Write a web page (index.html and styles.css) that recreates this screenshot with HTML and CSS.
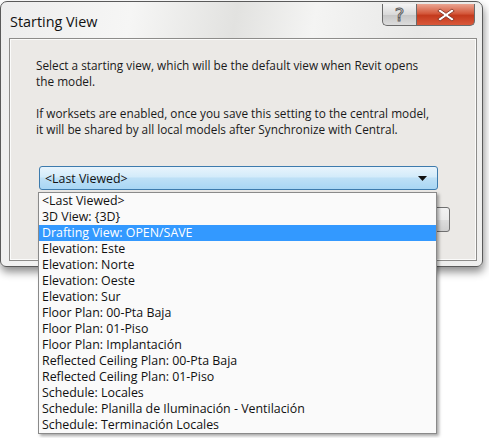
FILE: index.html
```html
<!DOCTYPE html>
<html>
<head>
<meta charset="utf-8">
<link rel="stylesheet" href="styles.css">
</head>
<body>
<div class="window">
  <div class="titlebar">
    <div class="title">Starting View</div>
    <div class="caption">
      <div class="cbtn help">?</div>
      <div class="cbtn close">
        <svg width="18" height="14" viewBox="0 0 18 14"><path d="M3 1 L9 5.3 L15 1 L17.2 3 L11.2 7 L17.2 11 L15 13 L9 8.7 L3 13 L0.8 11 L6.8 7 L0.8 3 Z" fill="#fff" stroke="#7a2a1a" stroke-width="0.8"/></svg>
      </div>
    </div>
  </div>
  <div class="panel">
    <p class="msg">Select a starting view, which will be the default view when Revit opens<br>the model.</p>
    <p class="msg">If worksets are enabled, once you save this setting to the central model,<br>it will be shared by all local models after Synchronize with Central.</p>
    <div class="combo">
      <span>&lt;Last Viewed&gt;</span>
      <svg class="arrow" width="9" height="5" viewBox="0 0 9 5"><path d="M0 0 H9 L4.5 5 Z" fill="#111"/></svg>
    </div>
    <div class="buttons">
      <div class="btn">OK</div>
    </div>
  </div>
</div>
<ul class="list">
  <li>&lt;Last Viewed&gt;</li>
  <li>3D View: {3D}</li>
  <li class="sel">Drafting View: OPEN/SAVE</li>
  <li>Elevation: Este</li>
  <li>Elevation: Norte</li>
  <li>Elevation: Oeste</li>
  <li>Elevation: Sur</li>
  <li>Floor Plan: 00-Pta Baja</li>
  <li>Floor Plan: 01-Piso</li>
  <li>Floor Plan: Implantación</li>
  <li>Reflected Ceiling Plan: 00-Pta Baja</li>
  <li>Reflected Ceiling Plan: 01-Piso</li>
  <li>Schedule: Locales</li>
  <li>Schedule: Planilla de Iluminación - Ventilación</li>
  <li>Schedule: Terminación Locales</li>
</ul>
</body>
</html>
```

FILE: styles.css
```css
html, body {
  margin: 0;
  padding: 0;
}
body {
  width: 489px;
  height: 438px;
  overflow: hidden;
  background: #ffffff;
  font-family: "Open Sans", "Liberation Sans", sans-serif;
  font-size: 12px;
  color: #111;
  position: relative;
}
.window {
  margin-top: 1px;
  height: 259px;
  border: 1px solid #5a5a5a;
  border-radius: 7px 7px 6px 6px;
  background: linear-gradient(100deg, #ededed 0%, #f6f6f5 25%, #e2e2e0 45%, #f4f4f3 60%, #e8e8e7 80%, #f0f0ef 100%);
  box-shadow: 1px 5px 9px rgba(0,0,0,0.45);
  display: flex;
  flex-direction: column;
  padding: 0 5px 5px 8px;
  box-sizing: content-box;
  width: 468px;
}
.titlebar {
  height: 36px;
  display: flex;
  align-items: flex-start;
  margin-right: -5px;
}
.title {
  font-size: 14.4px;
  color: #111;
  padding-top: 10px;
  padding-left: 1px;
  flex: 1;
}
.caption {
  display: flex;
  margin-top: 2px;
  margin-right: 7px;
}
.cbtn {
  height: 21px;
  border: 1px solid #6a6a6a;
  border-top: none;
  display: flex;
  align-items: center;
  justify-content: center;
}
.help {
  width: 33px;
  border-radius: 0 0 0 5px;
  border-right: none;
  background: linear-gradient(#f4f4f4, #d9d9d9 50%, #c6c6c6 52%, #dcdcdc);
  color: #f2f2f2;
  font-family: "DejaVu Sans", sans-serif;
  font-size: 18px;
  -webkit-text-stroke: 1px #606060;
}
.close {
  width: 57px;
  border-radius: 0 0 5px 0;
  background: linear-gradient(#eaa592, #d4593c 45%, #c43a1d 55%, #d9583a);
}
.panel {
  flex: 1;
  background: #ebe9e6;
  border: 1px solid #8d8c8a;
  box-shadow: inset 0 0 0 1px #fbfbfa;
  padding: 18px 26px 0 26px;
  display: flex;
  flex-direction: column;
}
.msg {
  margin: 0 0 16px 0;
  line-height: 16px;
  font-size: 11.8px;
  color: #1a1a1a;
  width: 420px;
  white-space: nowrap;
}
.combo {
  margin-top: 13px;
  margin-left: 3px;
  width: 392px;
  height: 22px;
  border: 1px solid #3d7bad;
  border-radius: 3px;
  background: linear-gradient(#e8f4fc, #d3ebfa 45%, #bee0f6 50%, #a8d6f4);
  display: flex;
  align-items: center;
  padding-left: 5px;
  font-size: 12.4px;
}
.combo span { flex: 1; }
.arrow { margin-right: 10px; }
.buttons {
  display: flex;
  justify-content: flex-end;
  margin-top: 17px;
}
.btn {
  width: 73px;
  height: 23px;
  border: 1px solid #707070;
  border-radius: 3px;
  background: linear-gradient(#f2f2f2, #ebebeb 50%, #dddddd 51%, #cfcfcf);
  display: flex;
  align-items: center;
  justify-content: center;
}
.list {
  position: absolute;
  left: 38px;
  top: 192px;
  width: 397px;
  height: 240px;
  margin: 0;
  padding: 0;
  list-style: none;
  background: #fafafa;
  border: 1px solid #8a8a8a;
  box-shadow: 2px 2px 3px rgba(0,0,0,0.35);
  font-size: 12.4px;
}
.list li {
  height: 16px;
  line-height: 16px;
  padding-left: 3px;
  white-space: nowrap;
}
.list li.sel {
  background: #3399ff;
  color: #fff;
}
```
